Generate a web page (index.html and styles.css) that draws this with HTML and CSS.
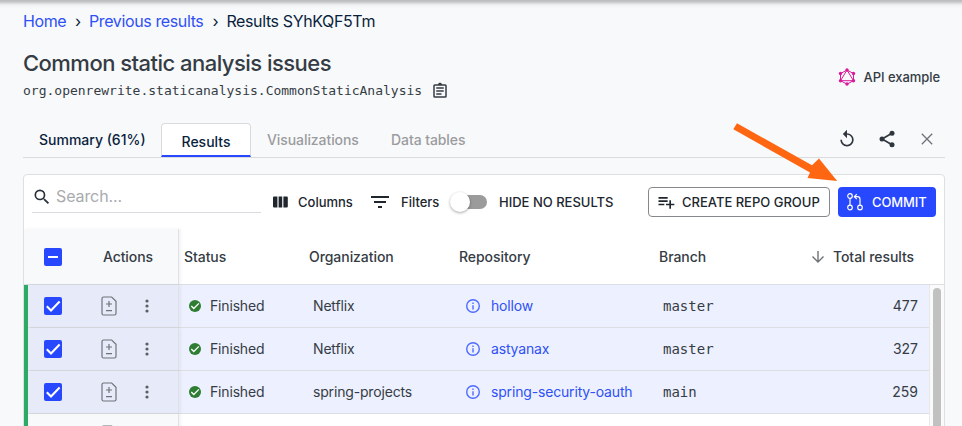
FILE: index.html
```html
<!DOCTYPE html>
<html lang="en">
<head>
<meta charset="utf-8">
<title>Common static analysis issues</title>
<link rel="stylesheet" href="styles.css">
</head>
<body>
<svg class="defs" width="0" height="0">
  <symbol id="check" viewBox="0 0 24 24"><path d="M19 3H5a2 2 0 0 0-2 2v14a2 2 0 0 0 2 2h14a2 2 0 0 0 2-2V5a2 2 0 0 0-2-2z" fill="#2748ff"/><path d="M5.8 12.2L10 16.4L18.6 7.6" fill="none" stroke="#fff" stroke-width="2.1"/></symbol>
  <symbol id="doc" viewBox="0 0 16 20"><path d="M2.5 1h8.2L15 5.2v12.3A1.5 1.5 0 0 1 13.5 19h-11A1.5 1.5 0 0 1 1 17.5v-15A1.5 1.5 0 0 1 2.5 1z" fill="none" stroke="#6f7379" stroke-width="1.2"/><path d="M8 5v6M5 8h6M5 14.7h6" fill="none" stroke="#6f7379" stroke-width="1.2"/></symbol>
  <symbol id="dots" viewBox="0 0 4 14"><circle cx="2" cy="2" r="1.6"/><circle cx="2" cy="7" r="1.6"/><circle cx="2" cy="12" r="1.6"/></symbol>
  <symbol id="done" viewBox="2 2 20 20"><circle cx="12" cy="12" r="10" fill="#2e7d32"/><path d="M5.8 12L10 16.2L18.4 7.6" fill="none" stroke="#fff" stroke-width="2.2"/></symbol>
  <symbol id="info" viewBox="2 2 20 20"><path d="M11 7h2v2h-2zm0 4h2v6h-2zm1-9a10 10 0 1 0 0 20 10 10 0 0 0 0-20zm0 18a8 8 0 1 1 0-16 8 8 0 0 1 0 16z" fill="#4e6bff"/></symbol>
</svg>
<main class="page">
  <nav class="crumbs"><a>Home</a><span class="sep">›</span><a>Previous results</a><span class="sep">›</span><span>Results SYhKQF5Tm</span></nav>
  <header class="head">
    <div class="head-text">
      <h1>Common static analysis issues</h1>
      <div class="recipe"><code>org.openrewrite.staticanalysis.CommonStaticAnalysis</code>
        <svg width="18" height="18" viewBox="0 0 24 24" fill="#353c44"><path d="M7 15h7v2H7zm0-4h10v2H7zm0-4h10v2H7zm12-4h-4.180C14.400 1.840 13.300 1 12 1s-2.400.840-2.820 2H5a2 2 0 0 0-2 2v14a2 2 0 0 0 2 2h14a2 2 0 0 0 2-2V5a2 2 0 0 0-2-2zm0 16H5V5h14z"/></svg>
      </div>
    </div>
    <div class="api">
      <svg width="18" height="18" viewBox="0 0 18 18" fill="#d81b98"><path d="M9 2l6.500 3.600v7L9 16.200l-6.500-3.600v-7zM9 2l6.500 10.700h-13z" fill="none" stroke="#d81b98" stroke-width="1"/><circle cx="9" cy="2" r="1.700"/><circle cx="15.500" cy="5.500" r="1.700"/><circle cx="15.500" cy="12.700" r="1.700"/><circle cx="9" cy="16" r="1.700"/><circle cx="2.500" cy="12.700" r="1.700"/><circle cx="2.500" cy="5.500" r="1.700"/></svg>
      <span>API example</span>
    </div>
  </header>
  <div class="tabs">
    <div class="tab summary">Summary (61%)</div><div class="tab active">Results</div><div class="tab muted vis">Visualizations</div><div class="tab muted data">Data tables</div>
    <div class="tab-tools">
      <svg width="20" height="20" viewBox="0 0 24 24" fill="#30363e"><path d="M12 5V1L7 6l5 5V7c3.310 0 6 2.690 6 6s-2.690 6-6 6-6-2.690-6-6H4c0 4.420 3.580 8 8 8s8-3.580 8-8-3.580-8-8-8z"/></svg>
      <svg width="20" height="20" viewBox="0 0 24 24" fill="#30363e"><path d="M18 5L6 12l12 7" fill="none" stroke="#30363e" stroke-width="2"/><circle cx="18" cy="5" r="3"/><circle cx="6" cy="12" r="3"/><circle cx="18" cy="19" r="3"/></svg>
      <svg width="20" height="20" viewBox="0 0 20 20"><path d="M4.800 4.800l10.400 10.400M15.200 4.800L4.800 15.200" stroke="#6e7277" stroke-width="1.300"/></svg>
    </div>
  </div>
  <section class="panel">
    <div class="toolbar">
      <div class="search"><svg width="20" height="20" viewBox="0 0 24 24" fill="#2a3038"><path d="M15.500 14h-.79l-.28-.27A6.470 6.470 0 0 0 16 9.500 6.500 6.500 0 1 0 9.500 16c1.610 0 3.090-.59 4.230-1.570l.27.28v.79l5 4.990L20.490 19l-4.990-5zm-6 0a4.500 4.500 0 1 1 0-9 4.500 4.500 0 0 1 0 9z"/></svg><span>Search...</span></div>
      <div class="tool columns"><svg width="15" height="12" viewBox="0 0 15 12" fill="#20262e"><path d="M1 .5h3.400v11H1a1 1 0 0 1-1-1v-9a1 1 0 0 1 1-1zM5.600.5h3.600v11H5.600zM10.400.5h3.400a1 1 0 0 1 1 1v9a1 1 0 0 1-1 1h-3.400z"/></svg><span>Columns</span></div>
      <div class="tool filters"><svg width="18" height="12" viewBox="0 0 18 12" fill="#20262e"><path d="M0 0h18v2H0zM3 5h12v2H3zM7 10h4v2H7z"/></svg><span>Filters</span></div>
      <div class="tool toggle"><span class="switch"><i></i></span><span>HIDE NO RESULTS</span></div>
      <div class="actions">
        <div class="btn outline"><svg width="20" height="20" viewBox="0 0 24 24" fill="#20262e"><path d="M14 10H3v2h11zm0-4H3v2h11zm4 8v-4h-2v4h-4v2h4v4h2v-4h4v-2zM3 16h7v-2H3z"/></svg><span>CREATE REPO GROUP</span></div>
        <div class="btn primary"><svg width="18" height="18" viewBox="0 0 18 18" fill="none" stroke="#fff" stroke-width="1.200"><circle cx="4" cy="3" r="2.300"/><circle cx="4" cy="14.500" r="2.300"/><circle cx="14" cy="14.500" r="2.300"/><path d="M4 5.300v7M14 12.200V6.200a2.500 2.500 0 0 0-2.500-2.500H8.500M10.800 1.200L8.300 3.700L10.800 6.200"/></svg><span>COMMIT</span></div>
      </div>
    </div>
    <div class="row thead">
      <div class="pinned"><svg class="box" width="24" height="24" viewBox="0 0 24 24"><rect x="3" y="3" width="18" height="18" rx="2" fill="#2748ff"/><path d="M7 12h10" stroke="#fff" stroke-width="2"/></svg><span class="act">Actions</span></div>
      <div>Status</div><div>Organization</div><div>Repository</div><div>Branch</div>
      <div class="total"><svg width="14" height="14" viewBox="0 0 14 14"><path d="M7 1v11M1.500 6.500L7 12l5.500-5.500" fill="none" stroke="#6e7277" stroke-width="1.400"/></svg><span>Total results</span></div>
    </div>
    <div class="tbody">
      <div class="rows">
        <div class="row selected">
          <div class="pinned"><svg class="box" width="24" height="24"><use href="#check"/></svg><svg class="doc" width="16" height="20"><use href="#doc"/></svg><svg class="dots" width="4" height="14"><use href="#dots"/></svg></div>
          <div class="status"><svg width="12" height="12"><use href="#done"/></svg><span>Finished</span></div><div><span>Netflix</span></div><div class="repo"><svg width="14" height="14"><use href="#info"/></svg><a>hollow</a></div><div class="branch">master</div><div class="num"><span>477</span></div>
        </div>
        <div class="row selected">
          <div class="pinned"><svg class="box" width="24" height="24"><use href="#check"/></svg><svg class="doc" width="16" height="20"><use href="#doc"/></svg><svg class="dots" width="4" height="14"><use href="#dots"/></svg></div>
          <div class="status"><svg width="12" height="12"><use href="#done"/></svg><span>Finished</span></div><div><span>Netflix</span></div><div class="repo"><svg width="14" height="14"><use href="#info"/></svg><a>astyanax</a></div><div class="branch">master</div><div class="num"><span>327</span></div>
        </div>
        <div class="row selected">
          <div class="pinned"><svg class="box" width="24" height="24"><use href="#check"/></svg><svg class="doc" width="16" height="20"><use href="#doc"/></svg><svg class="dots" width="4" height="14"><use href="#dots"/></svg></div>
          <div class="status"><svg width="12" height="12"><use href="#done"/></svg><span>Finished</span></div><div><span>spring-projects</span></div><div class="repo"><svg width="14" height="14"><use href="#info"/></svg><a>spring-security-oauth</a></div><div class="branch">main</div><div class="num"><span>259</span></div>
        </div>
        <div class="row">
          <div class="pinned"><span class="blank"></span><svg class="doc" width="16" height="20"><use href="#doc"/></svg></div>
        </div>
      </div>
      <div class="scroll"><div class="thumb"></div></div>
    </div>
  </section>
</main>
<svg class="arrow" width="106" height="62" viewBox="0 0 106 62"><path d="M6 .3L81 42.300L88 35.400L106.200 58L76.500 55L79 49.500L2.300 6.200z" fill="#ff6611"/></svg>
</body>
</html>
```
FILE: styles.css
```css
* { box-sizing: border-box; }
body {
  margin: 0;
  width: 962px;
  height: 426px;
  overflow: hidden;
  background: linear-gradient(#b9babc 0, #c6c7c9 2px, #e6e7e9 4px, #f4f5f7 6px, #f8f9fb 9px) no-repeat #f8f9fb;
  font-family: Inter, "Liberation Sans", sans-serif;
  color: #353c44;
}
svg { display: block; flex: none; }
.defs { position: absolute; }
.page { height: 426px; padding: 11px 17px 0 23px; overflow: hidden; }
a { color: #2f50f5; }

.crumbs { display: flex; height: 20px; line-height: 20px; font-size: 16px; letter-spacing: -.38px; color: #0a1f3d; white-space: nowrap; }
.crumbs .sep { width: 23px; padding-left: 1px; text-align: center; }
.crumbs a:first-child { width: 43px; }

.head { display: flex; justify-content: space-between; height: 92px; padding-top: 18px; }
h1 { margin: 0; font-size: 22px; line-height: 28px; font-weight: 500; letter-spacing: -.53px; white-space: nowrap; }
.recipe { display: flex; align-items: center; gap: 9px; height: 27px; font-size: 13px; }
.recipe code { font-family: "DejaVu Sans Mono", monospace; font-size: 13px; }
.api { display: flex; align-items: center; gap: 8px; height: 18px; margin: 19px 5px 0 0; font-size: 13px; font-weight: 500; letter-spacing: -.06px; }

.tabs { display: flex; height: 35px; border-bottom: 1px solid #d9dbde; font-size: 14px; line-height: 34px; font-weight: 500; white-space: nowrap; }
.tab.summary { width: 138px; padding-left: 16px; color: #0a1f3d; }
.tab.active { width: 90px; text-align: center; line-height: 35px; color: #0a1f3d; background: #fff; border: 1px solid #d9dbde; border-bottom: 2px solid #2748ff; border-radius: 4px 4px 0 0; }
.tab.muted { color: #9b9c9e; letter-spacing: -.08px; }
.tab.vis { width: 140px; padding-left: 16px; }
.tab-tools { display: flex; gap: 20px; margin: 6px 8px 0 auto; }

.panel { height: 270px; margin-top: 16px; background: #fff; border: 1px solid #dddfe1; border-radius: 4px 4px 0 0; }
.toolbar { display: flex; height: 54px; font-size: 13px; font-weight: 500; color: #20262e; white-space: nowrap; }
.search { display: flex; width: 229px; height: 38px; margin-left: 8px; border-bottom: 1px solid #d9dbde; font-size: 16px; font-weight: 400; line-height: 42px; letter-spacing: -.1px; color: #a9abae; }
.search svg { margin-top: 12px; }
.search span { margin-left: 4px; }
.tool { display: flex; align-items: center; height: 54px; }
.columns { width: 98px; margin-left: 12px; gap: 10px; }
.filters { gap: 12px; width: 82px; }
.switch { display: block; width: 34px; height: 14px; margin-right: 12px; border-radius: 7px; background: #9b9b9b; }
.switch i { display: block; width: 20px; height: 20px; margin: -3px 0 0 -3px; border-radius: 50%; background: #fff; box-shadow: 0 1px 3px rgba(0,0,0,.35); }
.actions { display: flex; gap: 8px; margin: 12px 8px 0 auto; }
.btn { display: flex; align-items: center; height: 30px; border-radius: 4px; }
.btn.outline { width: 182px; padding-left: 7px; gap: 6px; border: 1px solid #85888d; }
.btn.primary { width: 98px; padding-left: 8px; gap: 8px; background: #2748ff; color: #fff; letter-spacing: -.1px; }

.row { display: grid; grid-template-columns: 155px 125px 150px 200px 145px 130px; height: 43px; font-size: 14px; letter-spacing: -.17px; white-space: nowrap; border-bottom: 1px solid #dddee1; }
.row > div { display: flex; align-items: center; padding-left: 9px; }
.row > .pinned { padding-left: 17px; background: #f8f9fb; border-right: 1px solid #dfe1e6; box-shadow: 2px 0 3px rgba(0,0,0,.05); }
.thead { height: 56px; font-weight: 500; letter-spacing: -.06px; }
.thead > div { padding-left: 5px; }
.act { margin-left: 38px; letter-spacing: -.1px; }
.row > .total { justify-content: flex-end; padding: 0 15px 0 0; gap: 7px; }
.total svg { margin-right: 1px; }
.doc { margin-left: 36px; }
.dots { margin-left: 28px; fill: #5b6067; }
.blank { width: 24px; }
.tbody { display: flex; height: 172px; }
.rows { width: 906px; border-left: 4px solid #2cab66; }
.rows .row { grid-template-columns: 151px 125px 150px 200px 145px 130px; }
.rows .row > .pinned { padding-left: 13px; }
.rows .selected { background: #edf0ff; }
.rows .selected > .pinned { background: #e7eaf9; }
.rows span, .rows a { padding-bottom: 1px; }
.row > .status { padding-left: 10px; }
.status svg { margin-right: 9px; }
.repo svg { margin: 0 11px 0 3px; }
.rows .branch { font-family: "DejaVu Sans Mono", monospace; letter-spacing: 0; }
.row > .num { justify-content: flex-end; padding: 0 11px 0 0; letter-spacing: 0; }
.scroll { flex: 1; padding: 3px 3px 0 3px; border-left: 1px solid #e8e8e8; background: #fafafa; }
.thumb { width: 8px; height: 172px; border-radius: 4px 4px 0 0; background: #c1c1c1; }
.arrow { position: absolute; left: 731px; top: 123px; overflow: visible; }
```
